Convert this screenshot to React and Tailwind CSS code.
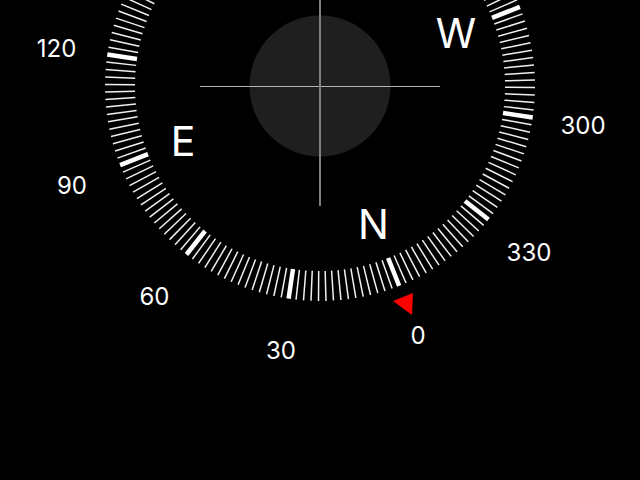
import React from "react";

const CX = 320;
const CY = 86;

// heading 0 sits about 21.6deg right of straight down
const tickPoint = (deg, r) => {
  const a = ((21.6 - deg) * Math.PI) / 180;
  return [CX + r * Math.sin(a), CY + r * Math.cos(a)];
};

const ticks = Array.from({ length: 180 }, (_, i) => i * 2);

const Dial = () => (
  <svg width="640" height="480" viewBox="0 0 640 480" className="block">
    <circle cx={CX} cy={CY} r="70.5" fill="#1f1f1f" />
    <line x1="200" y1="86.5" x2="440" y2="86.5" stroke="#b4b4b4" strokeWidth="1" />
    <line x1="320" y1="0" x2="320" y2="206" stroke="#808080" strokeWidth="2" />
    {ticks.map((deg) => {
      const major = deg % 30 === 0;
      const [x1, y1] = tickPoint(deg, 185);
      const [x2, y2] = tickPoint(deg, 215);
      return (
        <line
          key={deg}
          x1={x1}
          y1={y1}
          x2={x2}
          y2={y2}
          stroke={major ? "#ffffff" : "#f0f0f0"}
          strokeWidth={major ? 4.5 : 1.5}
        />
      );
    })}
    <polygon points="393,301 413,293 412,315" fill="#fe0000" />
  </svg>
);

const Label = ({ className, children }) => (
  <span
    className={`absolute -translate-x-1/2 -translate-y-1/2 leading-none text-white font-['Inter','Liberation_Sans',sans-serif] ${className}`}
  >
    {children}
  </span>
);

export default function App() {
  return (
    <div className="relative w-[640px] h-[480px] overflow-hidden bg-black">
      <Dial />
      <Label className="left-[183px] top-[141px] text-[41px]">E</Label>
      <Label className="left-[373.5px] top-[224px] text-[41px]">N</Label>
      <Label className="left-[456px] top-[33px] text-[41px]">W</Label>
      <Label className="left-[56.5px] top-[49px] text-2xl">120</Label>
      <Label className="left-[72px] top-[186px] text-2xl">90</Label>
      <Label className="left-[154.5px] top-[297px] text-2xl">60</Label>
      <Label className="left-[281px] top-[351px] text-2xl">30</Label>
      <Label className="left-[418px] top-[336px] text-2xl">0</Label>
      <Label className="left-[529px] top-[253px] text-2xl">330</Label>
      <Label className="left-[583px] top-[126px] text-2xl">300</Label>
    </div>
  );
}
